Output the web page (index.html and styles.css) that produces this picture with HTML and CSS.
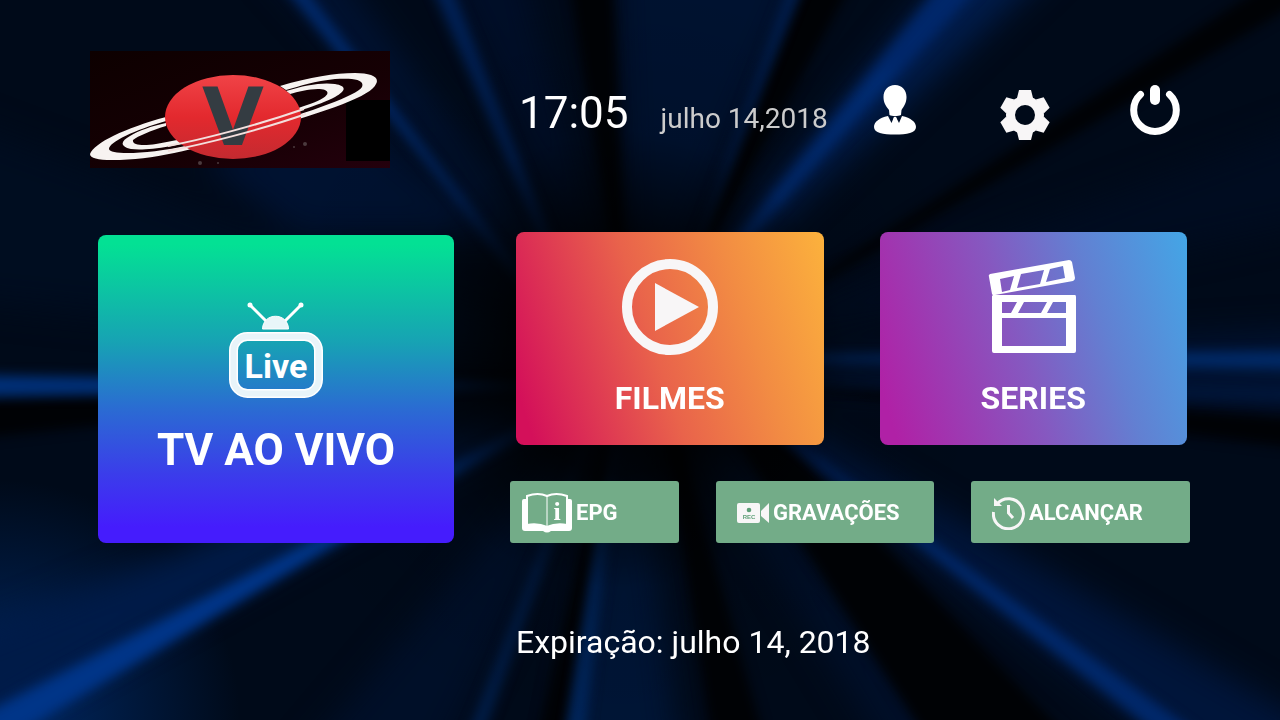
FILE: index.html
```html
<!DOCTYPE html>
<html lang="pt-BR">
<head>
    <meta charset="UTF-8">
    <meta name="viewport" content="width=device-width, initial-scale=1.0">
    <title>TV</title>
    <link rel="stylesheet" href="styles.css">
</head>
<body>
    <svg class="backdrop" viewBox="0 0 1280 720" preserveAspectRatio="none" aria-hidden="true">
        <defs>
            <filter id="soft" x="-10%" y="-10%" width="120%" height="120%" color-interpolation-filters="sRGB"><feGaussianBlur stdDeviation="16"/></filter>
            <filter id="fine" x="-10%" y="-10%" width="120%" height="120%" color-interpolation-filters="sRGB"><feGaussianBlur stdDeviation="6"/></filter>
            <radialGradient id="core" gradientUnits="userSpaceOnUse" cx="620" cy="360" r="380">
                <stop offset="0" stop-color="#000"/>
                <stop offset="0.3" stop-color="#000" stop-opacity="0.8"/>
                <stop offset="0.6" stop-color="#000" stop-opacity="0.1"/>
                <stop offset="1" stop-color="#000" stop-opacity="0"/>
            </radialGradient>
            <radialGradient id="corner" gradientUnits="userSpaceOnUse" cx="0" cy="720" r="240">
                <stop offset="0" stop-color="#002a68"/>
                <stop offset="1" stop-color="#002a68" stop-opacity="0"/>
            </radialGradient>
        </defs>
        <rect width="1280" height="720" fill="#000a19"/>
        <rect width="1280" height="720" fill="url(#corner)"/>
        <!-- wide rays -->
        <g filter="url(#soft)" fill="#001231">
            <path d="M630 370L260-40 330-40z"/>
            <path d="M630 370L440-40 520-40z" fill="#000e28"/>
            <path d="M630 370L615-40 810-40z" fill="#001230"/>
            <path d="M620 370L960-40 1060-40z" fill="#001c4a"/>
            <path d="M630 370L1320 120 1320 220z" fill="#000c20"/>
            <path d="M630 370L1320 330 1320 410z"/>
            <path d="M630 330L1190 760 1320 760 1320 730z" fill="#00153a"/>
            <path d="M630 330L560 760 680 760z" fill="#001536"/>
            <path d="M630 370L300 760 440 760z" fill="#000f28"/>
            <path d="M630 370L-40 640-40 740z" fill="#001b48"/>
            <path d="M630 370L-40 120-40 300z" fill="#000d20"/>
            <path d="M350 110L500 235 300 235 200 160z"/>
            <path d="M630 330L890 760 970 760z" fill="#000f28"/>
        </g>
        <!-- dark gaps -->
        <g filter="url(#fine)" fill="#000205">
            <path d="M630 370L566-40 612-40z"/>
            <path d="M640 370L815-40 865-40z"/>
            <path d="M640 390L1320-50 1320-10z"/>
            <path d="M630 330L536 740 565 740z"/>
            <path d="M650 330L715 760 770 760z"/>
            <path d="M640 290L940 760 1090 760z"/>
            <path d="M630 370L-40 400-40 440z"/>
            <path d="M630 370L1320 420 1320 450z"/>
        </g>
        <!-- bright streaks -->
        <g filter="url(#fine)">
            <path d="M570 340L262-40 284-40z" fill="#00296a"/>
            <path d="M600 370L420-40 442-40z" fill="#002054"/>
            <path d="M650 370L798-40 812-40z" fill="#001f50"/>
            <path d="M630 370L960-40 1004-40z" fill="#00276a"/>
            <path d="M640 360L900 60 880 76z" fill="#00337c"/>
            <path d="M630 385L-40 375-40 397z" fill="#003078"/>
            <path d="M630 358L1320 351 1320 369z" fill="#002a68"/>
            <path d="M630 380L1320 388 1320 402z" fill="#00163a"/>
            <path d="M730 395L1190 760 1235 760z" fill="#00286a"/>
            <path d="M630 370L-60 738-30 762z" fill="#003588"/>
            <path d="M628 350L562 760 582 760z" fill="#00265c"/>
            <path d="M620 350L457 760 474 760z" fill="#001d48"/>
        </g>
        <rect width="1280" height="720" fill="url(#core)"/>
    </svg>

    <header class="header">
        <svg class="logo" viewBox="0 0 300 117" role="img" aria-label="V">
            <defs>
                <linearGradient id="sky" x1="0" y1="0" x2="1" y2="1">
                    <stop offset="0" stop-color="#0d0000"/>
                    <stop offset="0.6" stop-color="#160004"/>
                    <stop offset="1" stop-color="#24000d"/>
                </linearGradient>
                <linearGradient id="planet" x1="0" y1="0" x2="0" y2="1">
                    <stop offset="0" stop-color="#f04347"/>
                    <stop offset="0.5" stop-color="#e3292e"/>
                    <stop offset="1" stop-color="#c42a30"/>
                </linearGradient>
            </defs>
            <rect width="300" height="117" fill="url(#sky)"/>
            <rect x="256" y="49" width="44" height="61" fill="#000"/>
            <g fill="#f7f3f1" fill-rule="evenodd">
                <path d="M190 35C220 26 245 22 265 22C281 22 290 26 286 33C281 45 240 60 157 83C100 99 65 109 22 109C8 109 0 107 0 103C4 92 35 77 76 66L76 70C45 79 19 91 19 98C20 104 55 104 100 94C190 72 265 47 272 36C275 28 262 27 245 28C225 30 210 35 196 39z"/>
                <path d="M196 40C215 34 233 31 245 33C257 35 256 40 245 46C225 57 170 71 123 85C85 96 55 100 41 98C29 95 31 90 40 85C50 79 62 75 76 72L76 75C60 80 48 85 43 89C42 94 52 95 66 93C110 86 180 67 220 53C236 47 241 42 235 39C227 36 210 40 200 43z"/>
            </g>
            <ellipse cx="143" cy="66" rx="68" ry="42" fill="url(#planet)"/>
            <text class="logo-letter" x="143" y="94" text-anchor="middle">V</text>
            <g fill="none" stroke="#f3dfdd" stroke-width="2">
                <path d="M78 95C110 89 165 75 214 58"/>
                <path d="M78 100C115 93 170 79 216 63"/>
            </g>
            <g fill="#4b3a3e">
                <circle cx="204" cy="96" r="1"/><circle cx="215" cy="93" r="2"/><circle cx="110" cy="112" r="2"/><circle cx="128" cy="112" r="1"/>
            </g>
        </svg>

        <div class="clock">
            <time class="time">17:05</time>
            <time class="date" datetime="2018-07-14">julho 14,2018</time>
        </div>

        <nav class="tools">
            <button class="tool" type="button" aria-label="Perfil">
                <svg viewBox="0 0 50 50" fill="#fff">
                    <path d="M25 0C32 0 36.500 5 36.500 12C36.500 18 34 21 31.500 25L31 30C28 31.500 22 31.500 19.500 30L19 25C16 21 13.500 18 13.500 12C13.500 5 18 0 25 0z"/>
                    <path d="M18 31L21.500 38 24 32H26L29 38 32 31C41 33 46 37 46 42C46 48 37 49.500 25 49.500S4 48 4 42C4 37 9 33 18 31z"/>
                    <path d="M24 32h2l1.500 6h-5z"/>
                </svg>
            </button>
            <button class="tool tool-low" type="button" aria-label="Ajustes">
                <svg viewBox="-25 -25 50 50" fill="#f8f6f7">
                    <circle r="14.500" fill="none" stroke="#f8f6f7" stroke-width="9"/>
                    <path id="tooth" d="M-8-17L-6-25H6L8-17z"/>
                    <use href="#tooth" transform="rotate(60)"/>
                    <use href="#tooth" transform="rotate(120)"/>
                    <use href="#tooth" transform="rotate(180)"/>
                    <use href="#tooth" transform="rotate(240)"/>
                    <use href="#tooth" transform="rotate(300)"/>
                </svg>
            </button>
            <button class="tool" type="button" aria-label="Sair">
                <svg viewBox="0 0 50 50" fill="none" stroke="#fff" stroke-linecap="round">
                    <path d="M10.500 9.500A21.300 21.300 0 1 0 39.500 9.500" stroke-width="7"/>
                    <path d="M25 5V15" stroke-width="10"/>
                </svg>
            </button>
        </nav>
    </header>

    <main class="menu">
        <button class="card live" type="button">
            <svg class="card-icon" viewBox="0 0 96 96">
                <g stroke="#fff" stroke-width="3" fill="#fff">
                    <path d="M22 3L39 20M73 3L56 20"/>
                    <circle cx="22" cy="3" r="1"/><circle cx="73" cy="3" r="1"/>
                </g>
                <path d="M34.500 27C35 10 60 10 60.500 27z" fill="#e8f6f9" stroke="#fff"/>
                <rect x="5.500" y="34.500" width="85" height="57" rx="14" fill="none" stroke="#fff" stroke-width="9"/>
                <rect x="5.500" y="34.500" width="85" height="57" rx="14" fill="none" stroke="#e8f4f9" stroke-width="6"/>
                <text class="live-text" x="48" y="76" text-anchor="middle">Live</text>
            </svg>
            <span class="card-label">TV AO VIVO</span>
        </button>

        <div class="side">
            <div class="cards">
                <button class="card movies" type="button">
                    <svg class="card-icon" viewBox="0 0 96 96">
                        <circle cx="48" cy="48" r="43" fill="none" stroke="#f8f6f7" stroke-width="10"/>
                        <path d="M33 24L77 48 33 72z" fill="#f8f6f7"/>
                    </svg>
                    <span class="card-label">FILMES</span>
                </button>
                <button class="card series" type="button">
                    <svg class="card-icon" viewBox="0 0 96 96" fill="#fff" fill-rule="evenodd">
                        <path d="M5 15Q3 16 4 18L7 35Q8 37 10 36L88 22Q90 21 90 19L87 3Q86 1 84 1zM15 20L29 17 25 31 17 33zM36 15L59 11 55 25 32 29zM65 10L78 7 80 19 61 23z"/>
                        <path d="M8 36H90Q91 36 91 38V92Q91 94 89 94H9Q7 94 7 92V37zM17 43V54H26L32 43zM39 43L33 54H56L62 43zM68 43L62 54H81V43zM17 59V87H81V59z"/>
                    </svg>
                    <span class="card-label">SERIES</span>
                </button>
            </div>

            <div class="shortcuts">
                <button class="shortcut epg" type="button">
                    <svg class="book" viewBox="0 0 50 46">
                        <path d="M5 9H2Q0 9 0 11V38Q0 41 3 41H21Q25 44 29 41H47Q50 41 50 38V11Q50 9 48 9H45V35Q34 33 25 37Q16 33 5 35z" fill="#fff"/>
                        <path d="M5 6Q16 2 25 6Q34 2 45 6V35Q34 33 25 37Q16 33 5 35z" fill="#73ac88" stroke="#fff" stroke-width="2"/>
                        <path d="M25 6V37" stroke="#fff"/>
                        <text class="info-text" x="35" y="30" text-anchor="middle">i</text>
                    </svg>
                    EPG
                </button>
                <button class="shortcut" type="button">
                    <svg class="camera" viewBox="0 0 32 20">
                        <rect width="23" height="20" rx="2" fill="#f8f6f7"/>
                        <path d="M24 8L32 0V20L24 13z" fill="#f8f6f7"/>
                        <circle cx="12" cy="7" r="2.300" fill="#5f9f78"/>
                        <text class="rec-text" x="12" y="16" text-anchor="middle">REC</text>
                    </svg>
                    GRAVAÇÕES
                </button>
                <button class="shortcut" type="button">
                    <svg class="history" viewBox="0 0 33 34" fill="none" stroke="#f8f6f7" stroke-width="3">
                        <path d="M1.500 16A15 15 0 1 0 5 8"/>
                        <path d="M2 2V10H10z" fill="#f8f6f7" stroke="none"/>
                        <path d="M16.500 9V17L21 22"/>
                    </svg>
                    ALCANÇAR
                </button>
            </div>
        </div>
    </main>

    <footer class="footer">Expiração: julho 14, 2018</footer>
</body>
</html>
```
FILE: styles.css
```css
* {
    box-sizing: border-box;
}
body {
    margin: 0;
    min-height: 100vh;
    background-color: #000a1a;
    color: #fff;
    font-family: Roboto, sans-serif;
}
svg {
    display: block;
}
button {
    border: none;
    padding: 0;
    color: #fff;
    font-family: inherit;
    cursor: pointer;
}
.backdrop {
    position: fixed;
    inset: 0;
    width: 100%;
    height: 100%;
    z-index: -1;
}

/* header */
.header {
    display: flex;
    align-items: flex-start;
    padding: 51px 100px 64px 90px;
}
.logo {
    width: 300px;
    margin-right: 129px;
}
.logo-letter {
    font: bold 80px "DejaVu Sans", sans-serif;
    fill: #343c42;
}
.clock {
    display: flex;
    align-items: baseline;
    gap: 32px;
    margin-top: 36px;
}
.time {
    font-size: 44px;
    line-height: 52px;
}
.date {
    font-size: 28px;
    color: #ccc;
}
.tools {
    display: flex;
    align-items: flex-start;
    gap: 80px;
    margin-top: 34px;
    margin-left: auto;
}
.tool {
    width: 50px;
    background: none;
}
.tool-low {
    padding-top: 5px;
}

/* cards */
.menu {
    display: grid;
    grid-template-columns: 356fr 680fr;
    gap: 56px;
    align-items: end;
    padding: 0 90px 0 98px;
}
.card {
    display: flex;
    flex-direction: column;
    align-items: center;
    gap: 24px;
    padding: 27px 0 28px;
    border-radius: 8px;
    font-size: 32px;
    font-weight: bold;
    line-height: 38px;
}
.card-icon {
    width: 96px;
}
.live {
    gap: 26px;
    padding: 67px 0;
    background: linear-gradient(#03e194 3%, #17a2b4 35%, #2b6ad3 57%, #3b3ceb 78%, #451cfd 95%);
    font-size: 44px;
    line-height: 52px;
}
.live-text {
    font: bold 34px Roboto, sans-serif;
    fill: #fff;
}
.movies {
    background: linear-gradient(72deg, #d4105a 5%, #e9634b 45%, #f28c43 72%, #fcb23c);
}
.series {
    background: linear-gradient(72deg, #b021a6 5%, #8658c0 45%, #6280d2 70%, #43a6e6);
}
.side {
    display: grid;
    gap: 36px;
}
.cards {
    display: grid;
    grid-template-columns: 1fr 1fr;
    gap: 56px;
    padding: 0 3px 0 6px;
}

/* shortcuts */
.shortcuts {
    display: grid;
    grid-template-columns: 169fr 218fr 219fr;
    gap: 37px;
}
.shortcut {
    display: flex;
    align-items: center;
    gap: 4px;
    min-height: 62px;
    padding: 7px 0 6px 21px;
    border-radius: 3px;
    background-color: #73ac88;
    font-size: 22px;
    font-weight: bold;
}
.epg {
    padding-left: 12px;
}
.book {
    width: 50px;
}
.camera {
    width: 32px;
}
.history {
    width: 33px;
}
.info-text {
    font: bold 26px "Liberation Serif", serif;
    fill: #fff;
}
.rec-text {
    font: bold 6px "Liberation Sans", sans-serif;
    fill: #5f9f78;
}

/* footer */
.footer {
    padding: 80px 90px 32px 516px;
    font-size: 32px;
    line-height: 38px;
}
```
